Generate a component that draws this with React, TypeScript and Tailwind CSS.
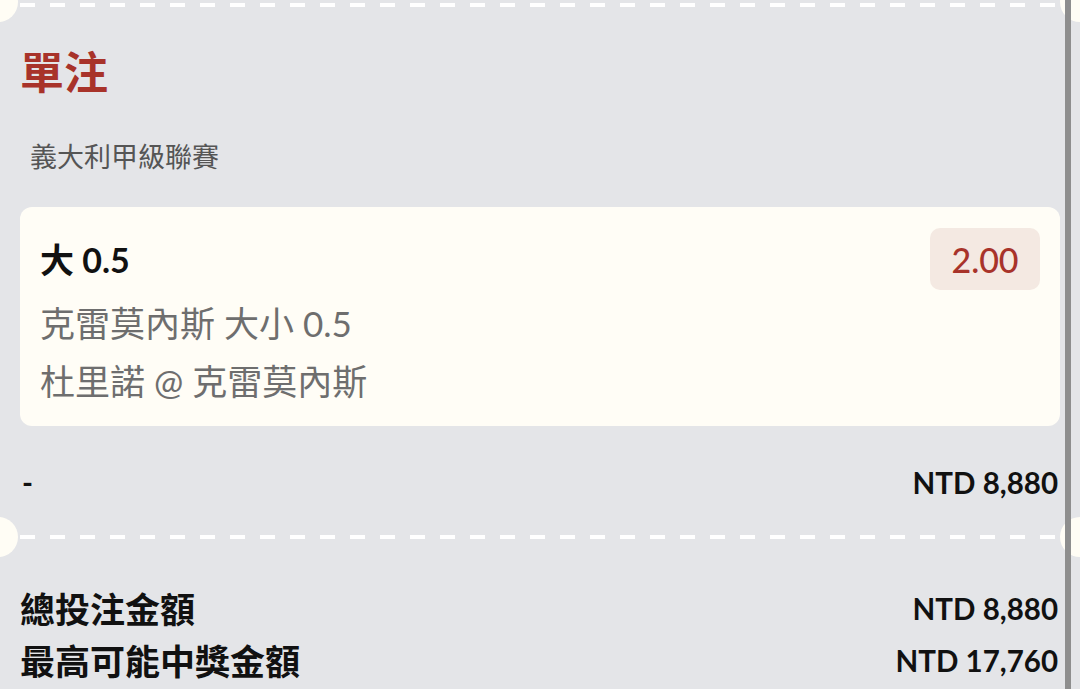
import React from "react";

const dash =
  "h-[4px] bg-[repeating-linear-gradient(90deg,#ffffff_0_15px,transparent_15px_30px)]";

export default function App() {
  return (
    <div className="relative h-[689px] w-[1080px] overflow-hidden bg-[#e4e5e8] font-['Lato','Noto_Sans_CJK_TC',sans-serif] text-[#111]">
      {/* ticket notches */}
      <div className="absolute left-[-22px] top-[-18px] h-10 w-10 rounded-full bg-[#fffdf5]" />
      <div className="absolute left-[1060px] top-[-18px] h-10 w-10 rounded-full bg-[#fffdf5]" />
      <div className="absolute left-[-22px] top-[517px] h-10 w-10 rounded-full bg-[#fffdf5]" />
      <div className="absolute left-[1060px] top-[517px] h-10 w-10 rounded-full bg-[#fffdf5]" />

      <div className="px-[20px]">
        <div className={`mt-[3px] ${dash}`} />

        <h1 className="mt-[39px] text-[44px] leading-[52px] font-bold text-[#a8332a]">單注</h1>
        <div className="mt-[43px] pl-[10px] text-[27px] leading-[32px] text-[#555]">義大利甲級聯賽</div>

        {/* selection card */}
        <div className="mt-[34px] rounded-[12px] bg-[#fffdf6] px-[20px] pt-[21px] pb-[16px]">
          <div className="flex h-[62px] items-center justify-between">
            <div className="text-[34px] font-bold">大 0.5</div>
            <div className="flex h-[62px] w-[110px] items-center justify-center rounded-[10px] bg-[#f4e9e2] text-[34px] font-medium text-[#a8332a]">
              2.00
            </div>
          </div>
          <div className="mt-[4px] text-[35px] leading-[58px] text-[#6e6e6e]">克雷莫內斯 大小 0.5</div>
          <div className="text-[35px] leading-[58px] text-[#6e6e6e]">杜里諾 @ 克雷莫內斯</div>
        </div>

        <div className="mt-[39px] flex items-center justify-between text-[29.5px] leading-[36px] font-bold">
          <span className="pl-[2px]">-</span>
          <span className="pr-[2px]">NTD 8,880</span>
        </div>

        <div className={`mt-[34px] ${dash}`} />

        <div className="mt-[44px] flex items-center justify-between leading-[52px]">
          <span className="text-[35px] font-bold">總投注金額</span>
          <span className="pr-[2px] text-[29.5px] font-bold">NTD 8,880</span>
        </div>
        <div className="flex items-center justify-between leading-[52px]">
          <span className="text-[35px] font-bold">最高可能中獎金額</span>
          <span className="pr-[2px] text-[29.5px] font-bold">NTD 17,760</span>
        </div>
      </div>

      {/* scrollbar overlay */}
      <div className="absolute top-0 bottom-0 left-[1065px] w-[6px] bg-[#8e8e8e]" />
    </div>
  );
}
